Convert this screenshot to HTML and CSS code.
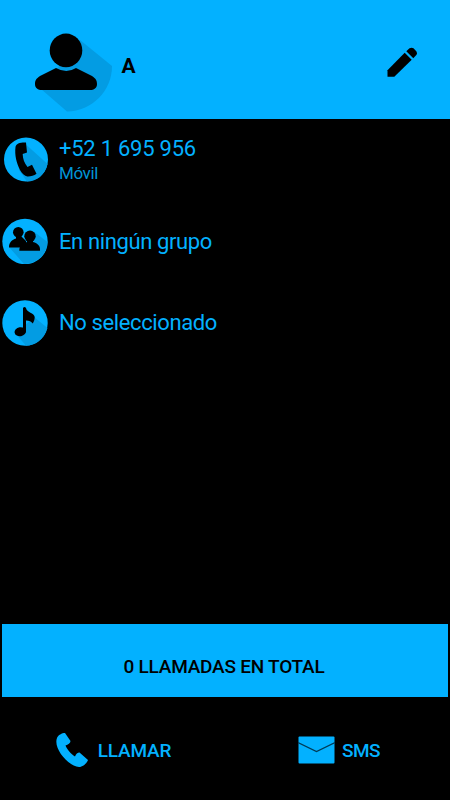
FILE: index.html
```html
<!DOCTYPE html>
<html lang="es">
<head>
  <meta charset="UTF-8">
  <meta name="viewport" content="width=device-width, initial-scale=1.0">
  <title>Contacto</title>
  <link rel="stylesheet" href="styles.css">
</head>
<body>
  <header class="header">
    <svg class="avatar" viewBox="0 0 84 84">
      <path class="shade" d="M50 10 L82 36 C82 61 62 81 37 81.500 L11 59 L30 35 Z"/>
      <path d="M26 38 Q36.500 44 46 38 L62 46 C66 48.500 67 51 67 54 C67 58 64 60 60 60 H12 C8 60 5 58 5 54 C5 51 6 48.500 10 46 Z"/>
      <ellipse cx="36" cy="20.400" rx="16.300" ry="16.800"/>
    </svg>
    <h1 class="name">A</h1>
    <svg class="edit" viewBox="0 0 30 30">
      <path d="M.5 23.300 L17.700 5.700 L24.700 12.700 L7.300 29.700 H.5 Z"/>
      <path d="M19.300 4.300 L22.500 1.300 Q24.700 0 26.500 1.300 L29.300 4.300 Q30.500 6.300 29.300 8 L26.300 11.300 Z"/>
    </svg>
  </header>

  <main class="details">
    <div class="row">
      <svg class="icon" viewBox="0 0 46 46">
        <circle class="disc" cx="24" cy="22.500" r="22"/>
        <path class="shade" d="M24.500 8 L45.500 27 C43 38 35 44.500 25 44.500 L17 33 Z"/>
        <path d="M13.500 10 C14 6.500 18 5.300 24 5.500 L25 15.500 L20.700 17 C20.700 22 22.500 26 25.500 30 L30 27.700 L34.500 36.700 C32 38.500 28.500 39.700 25.300 39.500 C22.500 39 20.500 37 18 33 C14.500 26 12.500 18 13.500 10 Z"/>
      </svg>
      <div class="info">
        <span class="number">+52 1 695 956</span>
        <span class="type">Móvil</span>
      </div>
    </div>
    <div class="row">
      <svg class="icon" viewBox="0 0 46 46">
        <circle class="disc" cx="23" cy="23.500" r="22.700"/>
        <path class="shade" d="M33 14.500 L45.500 24 C45 37 34 45.800 22 46 L7 29 H18 Z"/>
        <circle cx="16.300" cy="14.300" r="5.300"/>
        <path d="M7 29.500 C7 24 10 22 14 20.500 V18 H19 L24 23 V29.500 Z"/>
        <circle cx="28" cy="18.300" r="5.700"/>
        <path d="M17.300 32.700 C17.300 27.500 20 25.700 25 24 V22.500 H31 V24 C36 25.500 38.500 28 38 32.700 Z"/>
      </svg>
      <span class="label">En ningún grupo</span>
    </div>
    <div class="row">
      <svg class="icon" viewBox="0 0 46 46">
        <circle class="disc" cx="23" cy="23" r="22.700"/>
        <path class="shade" d="M32 17 L45.500 28 C42 40 33 45.700 24 45.700 L14 34 Z"/>
        <path d="M21 8 Q22.500 6 24 8 C24.500 12.500 32.500 13 32.700 17 C32.700 19.500 32 21.500 30.700 23.500 C29.500 21.500 27 20.700 24 20.500 V31.500 H21 Z"/>
        <ellipse cx="18.300" cy="31.700" rx="5.800" ry="4.500" transform="rotate(-10 18.300 31.700)"/>
      </svg>
      <span class="label">No seleccionado</span>
    </div>
  </main>

  <div class="total">0 LLAMADAS EN TOTAL</div>

  <footer class="actions">
    <div class="action call-action">
      <svg class="call" viewBox="0 0 34 36">
        <path d="M2 6 C3 3 7 1 10 1 L15.500 9 C15.500 11 13 12.500 10.500 13.500 C12 17.500 16 22 20 24.500 C21 22 22.500 20.500 24.500 20.500 L33 28 C32 31 28 35 24 35 C13 34 -2 16 2 6 Z"/>
      </svg>
      <span>LLAMAR</span>
    </div>
    <div class="action sms-action">
      <svg class="mail" viewBox="0 0 37 28">
        <rect x=".5" y=".5" width="36" height="27" rx="1"/>
        <path class="fold" d="M0 6.500 L18.500 15.500 L37 6.500"/>
      </svg>
      <span>SMS</span>
    </div>
  </footer>
</body>
</html>
```
FILE: styles.css
```css
* {
  box-sizing: border-box;
}

body {
  margin: 0;
  height: 800px;
  display: flex;
  flex-direction: column;
  background-color: #000;
  color: #03b1ff;
  font-family: Roboto, sans-serif;
}

svg {
  display: block;
  flex: none;
}

.header {
  height: 119px;
  display: flex;
  align-items: center;
  padding: 12px 33px 0 30px;
  background-color: #03b1ff;
  color: #000;
}

.avatar {
  width: 84px;
  height: 84px;
  margin-top: 13px;
}

.shade {
  fill: #039ce3;
}

.name {
  margin: 0 auto 0 7.500px;
  font-size: 21px;
  font-weight: 700;
}

.edit {
  width: 30px;
  height: 30px;
  margin-top: -7px;
}

.details {
  flex: 1;
}

.row {
  height: 81.500px;
  display: flex;
  align-items: center;
  gap: 11px;
  padding-left: 2px;
}

.icon {
  width: 46px;
  height: 46px;
}

.disc {
  fill: #03b1ff;
}

.info {
  display: flex;
  flex-direction: column;
  padding-top: 2px;
}

.number,
.label {
  font-size: 22px;
  line-height: 26px;
  letter-spacing: -.38px;
}

.number {
  letter-spacing: -.25px;
}

.label {
  padding-top: 1px;
}

.type {
  font-size: 17px;
  line-height: 23px;
  letter-spacing: -.4px;
  color: #0295d6;
}

.total {
  height: 73px;
  margin: 0 2px;
  padding: 12px 2px 0 0;
  display: flex;
  align-items: center;
  justify-content: center;
  background-color: #03b1ff;
  color: #000;
  font-size: 19px;
  font-weight: 500;
  letter-spacing: -.22px;
}

.actions {
  height: 103px;
  display: flex;
  padding-top: 3px;
  font-size: 19px;
  font-weight: 500;
  letter-spacing: -.2px;
}

.action {
  flex: 1;
  display: flex;
  align-items: center;
  justify-content: center;
}

.call-action {
  padding-left: 2px;
}

.sms-action {
  padding-left: 4px;
  letter-spacing: -.5px;
}

.call {
  width: 34px;
  height: 36px;
  margin-right: 9px;
  fill: #03b1ff;
}

.mail {
  width: 37px;
  height: 28px;
  margin-right: 7px;
  fill: #03b1ff;
}

.fold {
  fill: none;
  stroke: #003a55;
  stroke-width: 1.3;
}
```
